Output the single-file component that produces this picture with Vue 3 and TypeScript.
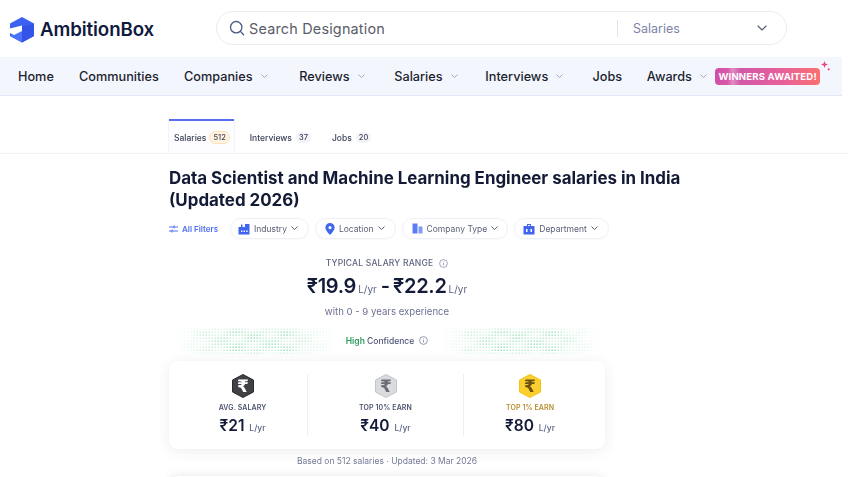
<script setup lang="ts">
const navItems = [
  { label: 'Home', chevron: false, cls: 'n-home' },
  { label: 'Communities', chevron: false, cls: 'n-communities' },
  { label: 'Companies', chevron: true, cls: 'n-companies' },
  { label: 'Reviews', chevron: true, cls: 'n-reviews' },
  { label: 'Salaries', chevron: true, cls: 'n-salaries' },
  { label: 'Interviews', chevron: true, cls: 'n-interviews' },
  { label: 'Jobs', chevron: false, cls: 'n-jobs' },
  { label: 'Awards', chevron: true, cls: 'n-awards' },
]
const tabs = [
  { label: 'Salaries', count: '512', active: true },
  { label: 'Interviews', count: '37', active: false },
  { label: 'Jobs', count: '20', active: false },
]
const filters = [
  { label: 'Industry', icon: 'industry' },
  { label: 'Location', icon: 'location' },
  { label: 'Company Type', icon: 'company' },
  { label: 'Department', icon: 'department' },
]
const stats = [
  { label: 'AVG. SALARY', value: '₹21', fill: '#3f4145', edge: '#2a2c30', glyph: '#ffffff', labelClass: '', cls: 'c1' },
  { label: 'TOP 10% EARN', value: '₹40', fill: '#d9dbdf', edge: '#c2c5ca', glyph: '#6b6e74', labelClass: '', cls: 'c2' },
  { label: 'TOP 1% EARN', value: '₹80', fill: '#fbcf2e', edge: '#f6c118', glyph: '#6e5212', labelClass: 'gold', cls: 'c3' },
]

interface Dot { x: number; y: number; o: number }
function makeDots(): Dot[] {
  const dots: Dot[] = []
  for (let c = 0; c < 54; c++) {
    for (let r = 0; r < 9; r++) {
      const t = c / 53
      const fade = Math.min(1, t * 3.2) * Math.min(1, (1 - t) * 3.2)
      const patch = 0.5 + 0.5 * Math.sin(c * 0.55) * Math.cos(r * 1.1 + c * 0.13)
      const vert = Math.min(1, (r + 1) / 2) * Math.min(1, (9 - r) / 2)
      dots.push({ x: c * 3 + 0.5, y: r * 3 + 0.5, o: +(fade * vert * (0.3 + 0.7 * patch)).toFixed(2) })
    }
  }
  return dots
}
const dots = makeDots()
</script>

<template>
  <div class="page">
    <header class="top">
      <div class="logo">
        <svg width="24" height="26" viewBox="0 0 24 26" aria-hidden="true">
          <path d="M12 0 24 6.5V19L12 25.5 0 19V6.5Z" fill="#3d62f2" />
          <path d="M12 9.5 24 6.5V19L12 25.5V14Z" fill="#3354e6" />
          <path d="M0 18.5 4 17 12 13.5V25.5L0 19Z" fill="#4c72fb" />
          <path d="M0 11.5 12 8.5V14L4 18 0 16Z" fill="#ffffff" />
        </svg>
        <span class="logo-text">AmbitionBox</span>
      </div>
      <div class="search">
        <svg class="search-icon" width="16" height="16" viewBox="0 0 16 16" fill="none" stroke="#4d5a86" stroke-width="1.3" stroke-linecap="round" aria-hidden="true">
          <circle cx="7.2" cy="7.2" r="5.7" />
          <path d="M11.4 11.4 14.6 14.8" />
        </svg>
        <span class="search-text">Search Designation</span>
        <span class="search-divider"></span>
        <span class="search-type">Salaries</span>
        <svg width="10" height="6" viewBox="0 0 10 6" fill="none" stroke="#555b70" stroke-width="1.1" stroke-linecap="round" stroke-linejoin="round" aria-hidden="true">
          <path d="M1 1 5 5 9 1" />
        </svg>
      </div>
    </header>

    <nav class="nav">
      <div v-for="item in navItems" :key="item.label" class="nav-item" :class="item.cls">
        <span>{{ item.label }}</span>
        <span v-if="item.chevron" class="nav-chev">
          <svg width="7" height="5" viewBox="0 0 7 5" fill="none" stroke="#a4a9bb" stroke-width="1" stroke-linecap="round" stroke-linejoin="round" aria-hidden="true">
            <path d="M0.8 0.8 3.5 3.6 6.2 0.8" />
          </svg>
        </span>
      </div>
      <div class="badge">
        WINNERS AWAITED!
        <svg class="sparkle" width="10" height="11" viewBox="0 0 10 11" fill="#e8457f" aria-hidden="true">
          <path d="M3.5 0 4.4 2.6 7 3.5 4.4 4.4 3.5 7 2.6 4.4 0 3.5 2.6 2.6Z" />
          <path d="M7.8 6.4 8.3 7.7 9.6 8.2 8.3 8.7 7.8 10 7.3 8.7 6 8.2 7.3 7.7Z" />
        </svg>
      </div>
    </nav>

    <main class="main">
      <div class="tabs">
        <div v-for="tab in tabs" :key="tab.label" class="tab" :class="{ active: tab.active }">
          <span>{{ tab.label }}</span>
          <span class="count">{{ tab.count }}</span>
        </div>
      </div>

      <section class="content">
        <h1>Data Scientist and Machine Learning Engineer salaries in India (Updated 2026)</h1>

        <div class="filters">
          <div class="all-filters">
            <svg width="9" height="8" viewBox="0 0 9 8" fill="none" stroke="#4f6ff0" stroke-width="1" aria-hidden="true">
              <path d="M0 2H4M6.5 2H9M0 6H2M4.5 6H9" />
              <circle cx="5.2" cy="2" r="1" />
              <circle cx="3.2" cy="6" r="1" />
            </svg>
            <span>All Filters</span>
          </div>
          <div v-for="f in filters" :key="f.label" class="pill" :class="'pill-' + f.icon">
            <svg v-if="f.icon === 'industry'" width="12" height="12" viewBox="0 0 12 12" fill="#4066ee" aria-hidden="true">
              <path d="M0.5 4 3 4V1.5h1.5V4H7V1h4.5v10.5H0.5Z" />
              <path d="M3 7.5h1.4v1.4H3ZM5.6 7.5H7v1.4H5.6ZM8.2 7.5h1.4v1.4H8.2Z" fill="#fff" />
            </svg>
            <svg v-else-if="f.icon === 'location'" width="10" height="12" viewBox="0 0 10 12" fill="#4066ee" aria-hidden="true">
              <path fill-rule="evenodd" d="M5 0a4.6 4.6 0 0 1 4.6 4.6C9.6 8 5 12 5 12S0.4 8 0.4 4.6A4.6 4.6 0 0 1 5 0Zm0 3a1.6 1.6 0 1 0 0 3.2A1.6 1.6 0 0 0 5 3Z" />
            </svg>
            <svg v-else-if="f.icon === 'company'" width="11" height="11" viewBox="0 0 11 11" fill="#5c7cf3" aria-hidden="true">
              <path d="M0.5 0.5h5v10h-5Z" />
              <path d="M6.5 3.5h4v7h-4Z" fill="#7f9af7" />
            </svg>
            <svg v-else width="12" height="12" viewBox="0 0 12 12" fill="#4066ee" aria-hidden="true">
              <path fill-rule="evenodd" d="M4 3V1h4v2h3.5v8.5H0.5V3ZM5 2v1h2V2Z" />
              <path d="M3 6h1.5v3H3ZM7.5 6H9v3H7.5Z" fill="#fff" />
            </svg>
            <span>{{ f.label }}</span>
            <svg width="7" height="5" viewBox="0 0 7 5" fill="none" stroke="#5c6275" stroke-width="1" stroke-linecap="round" stroke-linejoin="round" aria-hidden="true">
              <path d="M0.8 0.8 3.5 3.6 6.2 0.8" />
            </svg>
          </div>
        </div>

        <div class="range">
          <div class="range-label">
            <span>TYPICAL SALARY RANGE</span>
            <svg width="9" height="9" viewBox="0 0 9 9" fill="none" stroke="#8b90a8" stroke-width="0.8" aria-hidden="true">
              <circle cx="4.5" cy="4.5" r="3.9" />
              <path d="M4.5 4v2.4M4.5 2.5v.7" />
            </svg>
          </div>
          <div class="range-value">
            <span class="big">₹19.9</span><span class="unit">L/yr</span><span class="dash">-</span><span class="big">₹22.2</span><span class="unit">L/yr</span>
          </div>
          <div class="range-exp">with 0 - 9 years experience</div>
        </div>

        <div class="confidence">
          <svg class="dots dots-left" width="160" height="27" viewBox="0 0 160 27" aria-hidden="true">
            <rect v-for="(d, i) in dots" :key="i" :x="d.x" :y="d.y" width="1.3" height="1.3" fill="#6fd49a" :opacity="d.o" />
          </svg>
          <div class="conf-text">
            <span><b>High</b> Confidence</span>
            <svg width="9" height="9" viewBox="0 0 9 9" fill="none" stroke="#7c82a0" stroke-width="0.8" aria-hidden="true">
              <circle cx="4.5" cy="4.5" r="3.9" />
              <path d="M4.5 4v2.4M4.5 2.5v.7" />
            </svg>
          </div>
          <svg class="dots dots-right" width="160" height="27" viewBox="0 0 160 27" aria-hidden="true">
            <rect v-for="(d, i) in dots" :key="i" :x="d.x" :y="d.y" width="1.3" height="1.3" fill="#6fd49a" :opacity="d.o" />
          </svg>
        </div>

        <div class="card">
          <div v-for="s in stats" :key="s.label" class="stat" :class="s.cls">
            <svg width="22" height="24" viewBox="0 0 22 24" aria-hidden="true">
              <path d="M11 0.5 21.5 6v12L11 23.5 0.5 18V6Z" :fill="s.fill" :stroke="s.edge" stroke-width="1" stroke-linejoin="round" />
              <text x="11" y="18" text-anchor="middle" font-size="17" font-weight="700" font-family="'DejaVu Sans', sans-serif" :fill="s.glyph">₹</text>
            </svg>
            <div class="stat-label" :class="s.labelClass">{{ s.label }}</div>
            <div class="stat-value">{{ s.value }} <span>L/yr</span></div>
          </div>
        </div>

        <div class="based">Based on 512 salaries · Updated: 3 Mar 2026</div>
        <div class="next-card"></div>
      </section>
    </main>
  </div>
</template>

<style>
html, body { margin: 0; background: #fff; overflow: hidden; }
</style>

<style scoped>
.page {
  width: 848px;
  height: 477px;
  overflow: hidden;
  background: #fff;
  font-family: Inter, "Noto Sans", sans-serif;
  color: #10183a;
}
.top {
  height: 57px;
  display: flex;
  align-items: center;
  box-sizing: border-box;
  padding: 0 61px 0 10px;
  justify-content: space-between;
}
.logo { display: flex; align-items: center; gap: 6px; margin-top: 2px; }
.logo-text { font-size: 18.7px; font-weight: 600; letter-spacing: -0.1px; color: #0f1a3d; }
.search {
  width: 571px;
  height: 34px;
  margin-top: -1px;
  box-sizing: border-box;
  border: 1.5px solid #e9ebf3;
  border-radius: 18px;
  display: flex;
  align-items: center;
  padding: 0 19px 0 12px;
}
.search-text { margin-left: 4px; font-size: 14.4px; color: #5a5d68; letter-spacing: 0.2px; width: 368px; }
.search-divider { width: 1px; height: 17px; background: #e2e4ea; }
.search-type { margin-left: 15px; font-size: 12.5px; color: #7c83a8; flex: 1; }
.nav {
  width: 842px;
  height: 38px;
  box-sizing: border-box;
  background: #f4f6fd;
  box-shadow: 0 1px 0 #e3e6f6;
  display: flex;
  align-items: center;
  gap: 25.2px;
  padding-left: 18px;
  font-size: 12.7px;
  font-weight: 500;
  color: #1b1f30;
  position: relative;
}
.nav-item { display: flex; align-items: center; }
.nav-chev { display: flex; width: 19.5px; padding-left: 8px; box-sizing: border-box; }
.n-companies { margin-right: 2px; }
.n-salaries { margin-right: -2px; }
.n-interviews { margin-right: -0.5px; }
.n-jobs { margin-right: -0.5px; }
.badge {
  margin-left: -21.5px;
  width: 105px;
  height: 17px;
  border-radius: 4px;
  background: linear-gradient(90deg, #cf4fa8 0%, #d957a8 12%, #e08bc6 17%, #d258a8 24%, #e8609a 65%, #f8716f 100%);
  color: #fff;
  font-size: 9.6px;
  font-weight: 700;
  letter-spacing: 0.15px;
  text-align: center;
  line-height: 17px;
  position: relative;
  white-space: nowrap;
}
.sparkle { position: absolute; right: -11px; top: -7px; }
.main { filter: blur(0.4px); }
.tabs {
  margin-top: 24px;
  height: 34px;
  padding-left: 169px;
  border-bottom: 1px solid #f1f2f6;
  display: flex;
  font-size: 8.5px;
  font-weight: 500;
  color: #3c4258;
}
.tab {
  display: flex;
  align-items: center;
  gap: 4px;
  padding: 1px 5px 0;
  margin-right: 11px;
  box-sizing: border-box;
  border-top: 2px solid transparent;
}
.tab.active {
  border-top-color: #5570ee;
  background: #fdfdff;
  box-shadow: 1px 0 0 #f3f4fa, -1px 0 0 #f3f4fa;
}
.count {
  font-size: 7.5px;
  height: 11px;
  line-height: 11px;
  padding: 0 3px;
  background: #f3f4f7;
  border-radius: 6px;
}
.tab.active .count { background: #fff3df; box-shadow: 0 0 0 1px #fbe0b8; }
.content { padding-left: 169px; width: 436px; }
h1 {
  margin: 13px 0 0;
  font-size: 16.9px;
  line-height: 22px;
  font-weight: 650;
  color: #131a36;
  width: 525px;
}
.filters { display: flex; align-items: center; gap: 6px; margin-top: 7px; width: 445px; }
.all-filters {
  display: flex;
  align-items: center;
  gap: 4px;
  font-size: 8px;
  font-weight: 600;
  color: #4f6ff0;
  width: 55px;
}
.pill {
  height: 21px;
  box-sizing: border-box;
  border: 1px solid #eef0f6;
  border-radius: 11px;
  display: flex;
  align-items: center;
  gap: 4px;
  padding: 0 9px 0 7px;
  font-size: 8.5px;
  color: #5a5f74;
  white-space: nowrap;
  box-shadow: 0 1px 2px rgba(40, 50, 90, 0.03);
}
.pill-industry { padding-right: 10px; }
.pill-location { padding-left: 9px; padding-right: 10px; }
.pill-company { padding-left: 9px; }
.pill-department { padding-left: 8px; padding-right: 10px; }
.range { text-align: center; width: 436px; }
.range-label {
  margin-top: 19px;
  display: flex;
  justify-content: center;
  align-items: center;
  gap: 6px;
  font-size: 8.5px;
  font-weight: 500;
  letter-spacing: 0.2px;
  color: #60657f;
}
.range-value {
  display: flex;
  justify-content: center;
  align-items: baseline;
  margin-top: 5px;
  height: 26px;
  line-height: 26px;
}
.big { font-size: 20px; font-weight: 600; color: #141b38; letter-spacing: -0.3px; }
.unit { font-size: 10px; color: #5d6384; margin-left: 2px; }
.dash { font-size: 20px; font-weight: 600; margin: 0 3px 0 4px; color: #141b38; }
.range-exp { margin-top: 6px; font-size: 9.6px; color: #6c7190; line-height: 14px; }
.confidence {
  position: relative;
  margin-top: 9px;
  height: 27px;
  width: 436px;
  display: flex;
  align-items: center;
  justify-content: center;
}
.dots { position: absolute; top: 0; }
.dots-left { left: 6px; }
.dots-right { right: 5px; }
.conf-text {
  position: relative;
  display: flex;
  align-items: center;
  gap: 5px;
  font-size: 8.5px;
  font-weight: 500;
  color: #4d5374;
  margin-top: -2px;
}
.conf-text b { color: #2c9c5e; font-weight: 600; }
.card {
  margin-top: 6px;
  width: 436px;
  height: 88px;
  box-sizing: border-box;
  border-radius: 9px;
  background: #fff;
  box-shadow: 0 2px 14px rgba(50, 60, 100, 0.09);
  display: grid;
  grid-template-columns: 139px 156px 141px;
  align-items: center;
}
.stat {
  display: flex;
  flex-direction: column;
  align-items: center;
  height: 62px;
  box-sizing: border-box;
}
.c1 { border-right: 1px solid #eceef5; padding-left: 9px; }
.c2 { border-right: 1px solid #eceef5; }
.c3 { padding-right: 9px; }
.stat svg { flex: none; }
.stat-label {
  margin-top: 5px;
  font-size: 7px;
  font-weight: 600;
  letter-spacing: 0.1px;
  color: #4c5270;
  line-height: 10px;
}
.stat-label.gold { color: #b88d2f; }
.stat-value {
  margin-top: 3px;
  font-size: 15.5px;
  font-weight: 600;
  color: #141b38;
  line-height: 20px;
}
.stat-value span { font-size: 8.5px; font-weight: 500; color: #5d6384; margin-left: 1px; }
.based {
  margin-top: 6px;
  width: 436px;
  text-align: center;
  font-size: 8.5px;
  line-height: 12px;
  color: #737995;
}
.next-card {
  margin-top: 9px;
  width: 436px;
  height: 40px;
  border-radius: 9px;
  background: #fff;
  box-shadow: 0 -1px 8px rgba(50, 60, 100, 0.1);
}
</style>
